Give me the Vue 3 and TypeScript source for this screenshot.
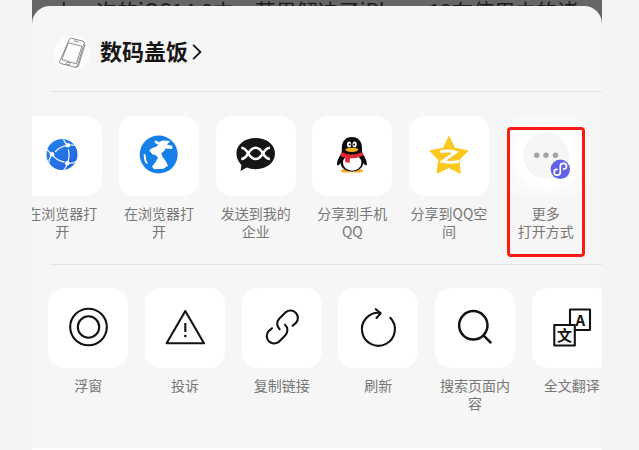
<script setup lang="ts">
interface Action {
  id: string
  label: string
  highlighted?: boolean
}

const shareTargets: Action[] = [
  { id: 'browser', label: '在浏览器打开' },
  { id: 'globe', label: '在浏览器打开' },
  { id: 'company', label: '发送到我的企业' },
  { id: 'qq', label: '分享到手机QQ' },
  { id: 'qzone', label: '分享到QQ空间' },
  { id: 'more', label: '更多\n打开方式', highlighted: true },
]

const pageTools: Action[] = [
  { id: 'float', label: '浮窗' },
  { id: 'report', label: '投诉' },
  { id: 'copy', label: '复制链接' },
  { id: 'refresh', label: '刷新' },
  { id: 'search', label: '搜索页面内容' },
  { id: 'translate', label: '全文翻译' },
]
</script>

<template>
  <main class="phone">
    <p class="article">上一次的iOS14.8中，苹果解决了iPhone13在使用中的诸</p>

    <section class="sheet">
      <header class="head">
        <svg class="avatar" viewBox="0 0 36 36" aria-hidden="true">
          <circle cx="18" cy="18" r="18" fill="#fdfdfd" />
          <g fill="none" stroke="#808080" stroke-width="0.9" stroke-linejoin="round">
            <path d="M15.5 4.2 Q16 3 17.5 3.3 L29 6.2 Q30.6 6.7 30.3 8 L23.3 31 Q22.6 32.7 21 32.3 L6.8 28.5 Q5.2 28 5.6 26.6 Z" />
            <path d="M14.3 7.8 L28 11.2 L22.2 28.8 L7.8 24.6 Z" />
            <path d="M30.3 8 L31 9.5 L24.3 31.2 L21.6 32.4" />
            <path d="M20 5.8 L24.5 7" />
            <ellipse cx="14.2" cy="28.5" rx="1.9" ry="1.3" />
          </g>
        </svg>
        <a class="account" href="#account">
          <span class="name">数码盖饭</span>
          <svg class="chevron" viewBox="0 0 10 18" aria-hidden="true">
            <path d="M1.2 1.8 L8.4 9 L1.2 16.2" fill="none" stroke="#161616" stroke-width="1.8" />
          </svg>
        </a>
      </header>

      <nav class="row share" aria-label="分享">
        <button
          v-for="item in shareTargets"
          :key="item.id"
          type="button"
          class="item"
          :class="{ highlighted: item.highlighted }"
        >
          <svg class="tile" :class="{ faint: item.id === 'more' }" viewBox="0 0 80 80" aria-hidden="true">
            <template v-if="item.id === 'browser'">
              <defs>
                <linearGradient id="net" x1="0" y1="0" x2="1" y2="1">
                  <stop offset="0" stop-color="#1f86e8" />
                  <stop offset="1" stop-color="#2a5fdd" />
                </linearGradient>
                <clipPath id="netClip"><circle cx="40" cy="38.5" r="15.5" /></clipPath>
              </defs>
              <circle cx="40" cy="38.5" r="15.5" fill="url(#net)" />
              <g clip-path="url(#netClip)" fill="none" stroke="#e4f1ff" stroke-width="1.3" stroke-linecap="round">
                <path d="M45.7 29.3 Q38 30.5 33.5 35.5" />
                <path d="M30 38.3 Q34 44 42 46" />
                <path d="M45.3 47.3 Q48 41 46.5 34" />
                <path d="M45.7 29.3 Q42 26 41 22 M45.7 29.3 Q51 28 57 31" />
                <path d="M30 38.3 Q26.5 36 24 32 M30 38.3 Q27 42 26.5 48" />
                <path d="M45.3 47.3 Q50 48 55 45 M45.3 47.3 Q44.5 51 41 55" />
              </g>
              <g fill="#fff">
                <circle cx="45.7" cy="29.3" r="2.3" />
                <circle cx="30" cy="38.3" r="2.3" />
                <circle cx="45.3" cy="47.3" r="2.3" />
              </g>
            </template>

            <template v-else-if="item.id === 'globe'">
              <circle cx="39.7" cy="38.5" r="19" fill="#1780e8" />
              <path
                d="M36 24.3 L40 26 L44 24.6 L51 25 L48 28.8 L53.3 29.7 V33 L46.5 32.6 Q45.5 36 42.3 37.3 L43.6 41 Q47 44.5 49 49.8 L44.3 52.8 L35 53.3 L33 50.6 Q37.5 46 39 41.6 Q36.5 38 33.5 38.5 L30.3 34.6 L33 32 Q37 31.8 39.3 28.8 L35.6 26.8 Z"
                fill="#fff"
              />
              <path d="M24.7 37.8 L26.5 38.5 Q26.5 44 29 48.2 L26.6 47 Q24.6 44 24.7 37.8 Z" fill="#fff" />
            </template>

            <template v-else-if="item.id === 'company'">
              <path
                d="M39.7 22 C50.8 22 59 28.6 59 37.6 C59 46.6 50.8 53.2 39.7 53.2 C36.5 53.2 33.5 52.6 30.8 51.5 L24.6 55 L25.4 49 C22.4 46 20.4 42 20.4 37.6 C20.4 28.6 28.6 22 39.7 22 Z"
                fill="#161616"
              />
              <g fill="none" stroke="#fff" stroke-width="2.6">
                <path d="M25.3 31.8 C32.5 32 32 43 39.6 43 S46.7 32 53.9 31.8" />
                <path d="M25.3 43 C32.5 42.8 32 31.8 39.6 31.8 S46.7 42.8 53.9 43" />
              </g>
            </template>

            <template v-else-if="item.id === 'qq'">
              <ellipse cx="34.5" cy="54.7" rx="5.7" ry="1.8" fill="#f3a920" />
              <ellipse cx="45.3" cy="54.7" rx="5.7" ry="1.8" fill="#f3a920" />
              <path
                d="M39.8 21 C46.5 21 50 25.7 50 32 L50.2 37 C52.8 40.5 55.2 45.5 54.8 48.8 C54.5 50.5 52.5 49 51.3 47 C50.8 52 46.5 55.4 39.9 55.4 C33.3 55.4 29 52 28.6 47 C27.3 49 25.4 50.5 25.1 48.8 C24.7 45.5 27.1 40.5 29.7 37 L29.8 32 C29.8 25.7 33.2 21 39.8 21 Z"
                fill="#0c0c0e"
              />
              <ellipse cx="40.2" cy="46.7" rx="9.2" ry="8" fill="#fff" />
              <path d="M29.4 36 Q40 41.5 50.4 36 L51.4 39.6 Q45 42.7 38 42.3 L37.7 46.8 L33.2 46.2 L33.3 41.7 Q30.5 41.2 28.3 39.8 Z" fill="#e62735" />
              <ellipse cx="37.1" cy="28.4" rx="2.1" ry="3" fill="#fff" />
              <ellipse cx="42.6" cy="28.4" rx="2.1" ry="3" fill="#fff" />
              <circle cx="37.7" cy="28.6" r="1" fill="#0c0c0e" />
              <circle cx="42.1" cy="28.6" r="1" fill="#0c0c0e" />
              <ellipse cx="39.8" cy="33.8" rx="6.5" ry="2.1" fill="#f7b01b" />
            </template>

            <template v-else-if="item.id === 'qzone'">
              <path
                d="M40 20.5 L45.7 32.2 L58.9 34.8 L49.9 44.2 L51.3 57.2 L39.7 51.6 L28.1 57.2 L29.7 44.2 L20.9 34.8 L34.3 32.2 Z"
                fill="#fcc81e"
                stroke="#fcc81e"
                stroke-linejoin="round"
              />
              <path d="M31 35.6 Q40 34.2 46.6 36.2 L33.6 45.4 Q42 47.3 50 45.4" fill="none" stroke="#fff" stroke-width="2.8" stroke-linejoin="miter" />
            </template>

            <template v-else>
              <circle cx="40" cy="39.5" r="23" fill="#f6f6f6" />
              <g fill="#a3a3a3">
                <circle cx="30.7" cy="39.3" r="2.7" />
                <circle cx="40" cy="39.3" r="2.7" />
                <circle cx="49.4" cy="39.3" r="2.7" />
              </g>
              <circle cx="54.3" cy="53.3" r="9.7" fill="#6262e6" />
              <path
                d="M57.6 53.2 a3.1 2.9 0 1 0 -3.3 -2.8 v5.8 a3.1 2.9 0 1 1 -3.3 -2.8"
                fill="none"
                stroke="#fff"
                stroke-width="1.7"
                stroke-linecap="round"
              />
            </template>
          </svg>
          <span class="label">{{ item.label }}</span>
        </button>
      </nav>

      <nav class="row tools" aria-label="页面工具">
        <button v-for="item in pageTools" :key="item.id" type="button" class="item">
          <svg class="tile" viewBox="0 0 80 80" aria-hidden="true">
            <g fill="none" stroke="#121212" stroke-width="2.1" stroke-linecap="round" stroke-linejoin="round">
              <template v-if="item.id === 'float'">
                <circle cx="40.5" cy="39" r="18.3" />
                <circle cx="40.5" cy="39" r="10.7" />
              </template>

              <template v-else-if="item.id === 'report'">
                <path d="M40.3 23 L59 55.3 H21.6 Z" />
                <path d="M40.3 35 V44" stroke-linecap="butt" />
                <circle cx="40.3" cy="48" r="1.3" fill="#121212" stroke="none" />
              </template>

              <template v-else-if="item.id === 'copy'">
                <path d="M50.6 37.7 L54.2 34.6 A7.4 7.4 0 0 0 43.9 24.1 L37.2 30.8 A7.4 7.4 0 0 0 37.6 41.3" />
                <path
                  d="M50.6 37.7 L54.2 34.6 A7.4 7.4 0 0 0 43.9 24.1 L37.2 30.8 A7.4 7.4 0 0 0 37.6 41.3"
                  transform="rotate(180 40.3 39)"
                />
              </template>

              <template v-else-if="item.id === 'refresh'">
                <path d="M52.3 29.8 A16.5 16.5 0 1 1 41.8 24.8" />
                <path d="M37.8 21.2 L42.7 25.3 L38.5 30" />
              </template>

              <template v-else-if="item.id === 'search'">
                <circle cx="38.3" cy="37.3" r="14.2" stroke-width="2.5" />
                <path d="M48.2 47.2 L56.2 55.2" stroke-width="2.5" stroke-linecap="butt" />
              </template>

              <template v-else>
                <rect x="38" y="21.5" width="20" height="20.5" />
                <rect x="22.3" y="37" width="20.5" height="20.5" fill="#fff" />
              </template>
            </g>
            <g v-if="item.id === 'translate'" class="glyphs">
              <text x="48.3" y="37.5" font-size="15">A</text>
              <text x="32.5" y="52.8" font-size="15">文</text>
            </g>
          </svg>
          <span class="label">{{ item.label }}</span>
        </button>
      </nav>
    </section>
  </main>
</template>

<style>
body {
  margin: 0;
  background: #f4f4f4;
}
</style>

<style scoped>
.phone {
  margin: 0 37px 0 32px;
  padding-bottom: 2px;
  background: linear-gradient(#666 0 40px, #fdfdfd 40px);
  font-family: "Noto Sans CJK SC", "Noto Sans", sans-serif;
  overflow: hidden;
}

.article {
  height: 6px;
  margin: 0;
  padding: 0 22px;
  overflow: hidden;
  color: #1c1c1c;
  font-size: 21px;
  line-height: 20px;
  white-space: nowrap;
}

.sheet {
  padding-bottom: 12px;
  border-radius: 18px 18px 0 0;
  background: #f6f6f6;
  overflow: hidden;
}

.head {
  display: flex;
  align-items: center;
  gap: 10px;
  margin-left: 18px;
  padding: 29px 0 20px 4px;
  border-bottom: 1px solid #e2e2e2;
}

.avatar {
  width: 36px;
  height: 36px;
}

.account {
  display: flex;
  align-items: center;
  gap: 4px;
  padding-bottom: 2px;
  color: #161616;
  font-size: 22px;
  font-weight: 700;
  text-decoration: none;
}

.name {
  padding-bottom: 4px;
  line-height: 26px;
}

.chevron {
  width: 10px;
  height: 18px;
}

.row {
  display: grid;
  grid-template-columns: repeat(6, 1fr);
  width: calc(100% + 10px);
  padding: 24px 0;
}

.share {
  margin-left: -18px;
}

.tools {
  position: relative;
  margin-left: 8px;
}

.tools::before {
  content: "";
  position: absolute;
  top: 0;
  left: 10px;
  right: 0;
  height: 1px;
  background: #e2e2e2;
}

.item {
  position: relative;
  display: flex;
  flex-direction: column;
  align-items: center;
  gap: 8px;
  margin: 0;
  padding: 0;
  border: 0;
  background: none;
  color: #777;
  font: inherit;
  cursor: pointer;
}

.tile {
  width: 80px;
  height: 80px;
  border-radius: 16px;
  background: #fff;
}

.faint {
  background: radial-gradient(#fff 50%, #f9f9f9 72%);
}

.label {
  width: 80px;
  font-size: 14px;
  line-height: 18px;
  text-align: center;
  white-space: pre-line;
}

.highlighted::after {
  content: "";
  position: absolute;
  inset: 11px 9px -17px 10px;
  border: 3px solid #fa1b12;
  border-radius: 4px;
}

.glyphs {
  fill: #121212;
  font-weight: 700;
  text-anchor: middle;
}
</style>
